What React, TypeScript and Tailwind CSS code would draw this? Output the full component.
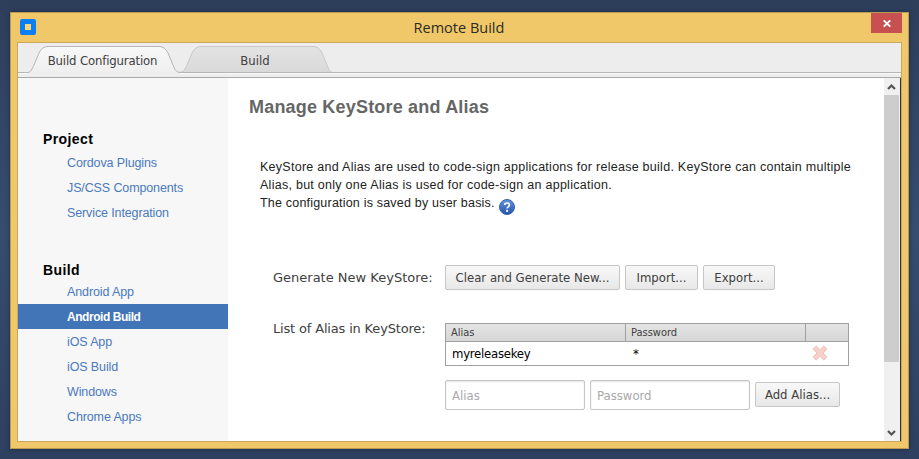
import React from "react";

const arial = "font-['Liberation_Sans',Arial,sans-serif]";
const verdana = "font-['DejaVu_Sans',Verdana,sans-serif]";
const tahoma = "font-['DejaVu_Sans_Condensed','DejaVu_Sans',Tahoma,sans-serif] [font-stretch:condensed]";

function Link({ label, active = false }: { label: string; active?: boolean }) {
  return (
    <a
      className={`block h-[25px] pt-px pl-[49px] leading-[25px] whitespace-nowrap ${
        active
          ? "bg-[#4175b8] text-[12px] font-bold tracking-[-0.45px] text-white"
          : "text-[12.5px] tracking-[-0.12px] text-[#4a7abd]"
      }`}
    >
      {label}
    </a>
  );
}

function Button({ label, className }: { label: string; className: string }) {
  return (
    <button
      className={`flex h-[25px] shrink-0 items-center justify-center rounded-[2px] border border-[#c6c6c6] bg-linear-to-b from-[#f8f8f8] to-[#e8e8e8] text-[13px] whitespace-nowrap text-[#404040] ${className}`}
    >
      {label}
    </button>
  );
}

function Field({ label, className }: { label: string; className: string }) {
  return (
    <input
      placeholder={label}
      className={`h-[30px] shrink-0 rounded-[2px] border border-[#c6c6c6] bg-white pt-px pl-[6px] text-[13px] shadow-[inset_0_1px_2px_#e4e4e4] placeholder:text-[#a9a9a9] ${tahoma} ${className}`}
    />
  );
}

function Tabs() {
  return (
    <div className="relative h-[35px] bg-[#ededed]">
      <svg width="883" height="35" className="block">
        <defs>
          <linearGradient id="on" x1="0" y1="0" x2="0" y2="1">
            <stop offset="0" stopColor="#f8f8f8" />
            <stop offset="1" stopColor="#ededed" />
          </linearGradient>
          <linearGradient id="off" x1="0" y1="0" x2="0" y2="1">
            <stop offset="0" stopColor="#e3e3e3" />
            <stop offset="1" stopColor="#d9d9d9" />
          </linearGradient>
        </defs>
        <path
          d="M161 29.5C166 29 167 26 169 22L174 10Q177 3.5 183 3.5H295Q301 3.500 304 10L309 22C311 27 312 29 315 29.500Z"
          fill="url(#off)"
          stroke="#c8c8c8"
        />
        <path
          d="M10 29.500C13 29 14 26 16 22L21 10Q24 3.500 30 3.500H141Q147 3.500 150 10L155 22C157 27 158 29 162 29.500L162 34H10Z"
          fill="url(#on)"
        />
        <path d="M162 30.500H883M0 30.500H10" stroke="#fafafa" />
        <path
          d="M0 29.500H10C13 29 14 26 16 22L21 10Q24 3.500 30 3.500H141Q147 3.500 150 10L155 22C157 27 158 29 162 29.500H883"
          fill="none"
          stroke="#b5b5b5"
        />
        <path d="M0 34.500H883" stroke="#a9a9a9" />
      </svg>
      <div className={`absolute inset-0 flex h-[35px] text-[13px] leading-[35px] text-[#404040] ${tahoma}`}>
        <span className="w-[169px] text-center tracking-[-0.15px]">Build Configuration</span>
        <span className="w-[136px] text-center">Build</span>
      </div>
    </div>
  );
}

function Sidebar() {
  return (
    <nav className={`h-full w-[210px] shrink-0 bg-[#f7f7f7] pt-[50px] ${arial}`}>
      <h2 className="h-[22px] pl-[25px] text-[14px] leading-[22px] font-bold tracking-[0.4px]">Project</h2>
      <Link label="Cordova Plugins" />
      <Link label="JS/CSS Components" />
      <Link label="Service Integration" />
      <h2 className="mt-[34px] h-[20px] pl-[25px] text-[14px] leading-[22px] font-bold tracking-[0.4px]">Build</h2>
      <Link label="Android App" />
      <Link label="Android Build" active />
      <Link label="iOS App" />
      <Link label="iOS Build" />
      <Link label="Windows" />
      <Link label="Chrome Apps" />
    </nav>
  );
}

function HelpIcon() {
  return (
    <svg width="16" height="16" viewBox="0 0 16 16" className="mb-px ml-1 shrink-0">
      <defs>
        <linearGradient id="help" x1="0" y1="0" x2="0" y2="1">
          <stop offset="0" stopColor="#6294dc" />
          <stop offset="1" stopColor="#2454ae" />
        </linearGradient>
      </defs>
      <circle cx="8" cy="8" r="7.500" fill="url(#help)" stroke="#3763ad" />
      <path d="M5.700 6C5.700 3.300 10.400 3.300 10.400 6C10.400 7.800 8.100 7.800 8.100 9.600" fill="none" stroke="#fff" strokeWidth="1.700" />
      <rect x="7.100" y="10.900" width="2" height="2" fill="#fff" />
    </svg>
  );
}

function Main() {
  return (
    <main className="flex min-w-0 flex-1 flex-col bg-white pl-[21px]">
      <h1 className={`mt-[17px] h-[24px] text-[18px] leading-[24px] font-bold tracking-[0.19px] text-[#666] ${arial}`}>
        Manage KeyStore and Alias
      </h1>
      <div className={`mt-[39px] h-[108px] pl-[11px] text-[12.5px] leading-[18px] tracking-[0.27px] whitespace-nowrap text-[#222] ${arial}`}>
        <p>KeyStore and Alias are used to code-sign applications for release build. KeyStore can contain multiple</p>
        <p>Alias, but only one Alias is used for code-sign an application.</p>
        <div className="flex h-[22px] items-end">
          <p className="h-[22px] w-[235px] tracking-[0.2px]">The configuration is saved by user basis.</p>
          <HelpIcon />
        </div>
      </div>
      <div className={`flex h-[24px] pl-[24px] text-[13px] text-[#404040] ${verdana}`}>
        <span className="w-[172px] shrink-0 leading-[24px] whitespace-nowrap">Generate New KeyStore:</span>
        <div className={`-mt-px flex gap-[5px] ${tahoma}`}>
          <Button label="Clear and Generate New..." className="w-[175px]" />
          <Button label="Import..." className="w-[73px]" />
          <Button label="Export..." className="w-[72px]" />
        </div>
      </div>
      <div className={`mt-[32px] flex pl-[24px] text-[13px] text-[#404040] ${verdana}`}>
        <span className="w-[172px] shrink-0 leading-[13px] tracking-[-0.17px] whitespace-nowrap">
          List of Alias in KeyStore:
        </span>
        <div className={tahoma}>
          <div className="mt-px h-[43px] w-[404px] border border-[#a0a0a0]">
            <div className="flex h-[18px] border-b border-[#a0a0a0] bg-linear-to-b from-[#e4e4e4] to-[#d6d6d6] text-[11px] leading-[18px]">
              <span className="w-[180px] border-r border-[#a0a0a0] pl-[5px]">Alias</span>
              <span className="w-[180px] border-r border-[#a0a0a0] pl-[5px]">Password</span>
            </div>
            <div className="flex h-[23px] text-[13px] leading-[23px] text-black">
              <span className="w-[187px] pl-[6px] tracking-[-0.25px]">myreleasekey</span>
              <span className="w-[179px]">*</span>
              <svg width="16" height="16" viewBox="0 0 16 16" className="mt-[3px]">
                <path
                  d="M4.300 1L1.200 4L5 8L1.200 12L4.300 15L8 11.300L11.700 15L14.800 12L11 8L14.800 4L11.700 1L8 4.700Z"
                  fill="#f6d0c9"
                  stroke="#efbfb7"
                  strokeLinejoin="round"
                />
              </svg>
            </div>
          </div>
          <div className="mt-[14px] flex gap-[5px]">
            <Field label="Alias" className="w-[140px]" />
            <Field label="Password" className="w-[160px]" />
            <Button label="Add Alias..." className="mt-[2px] w-[85px]" />
          </div>
        </div>
      </div>
    </main>
  );
}

function Scrollbar() {
  return (
    <div className="flex w-[17px] shrink-0 flex-col border-r border-[#30323a] bg-[#f0f0f0]">
      <svg width="16" height="17">
        <path d="M4 11L7.500 7.500L11 11" fill="none" stroke="#555" strokeWidth="2.200" />
      </svg>
      <div className="h-[267px] w-[15px] bg-[#cdcdcd]" />
      <svg width="16" height="17" className="mt-auto">
        <path d="M4 7L7.500 10.500L11 7" fill="none" stroke="#555" strokeWidth="2.200" />
      </svg>
    </div>
  );
}

export default function App() {
  return (
    <div className="h-[459px] w-[919px] overflow-hidden bg-linear-to-b from-[#2d3e5b] via-[#364d70] to-[#2e405f] pt-[12px] pl-[10px]">
      <div className="flex h-[437px] w-[899px] flex-col border border-[#b89a52] bg-[#f0c869] px-[6px] pb-[6px] shadow-[0_0_4px_#1d2a40]">
        <header className="flex h-[29px] shrink-0">
          <div className="w-[300px] pt-[6px] pl-[3px]">
            <div className="h-[16px] w-[16px] rounded-[2px] border-5 border-[#087ff5] bg-[#f8d47c]" />
          </div>
          <div className="w-[284px] text-center font-['Open_Sans','Noto_Sans',sans-serif] text-[14.5px] leading-[30px] text-[#2b2b26]">
            Remote Build
          </div>
          <div className="ml-auto flex h-[20px] w-[31px] items-center justify-center bg-[#c75050]">
            <svg width="8" height="7">
              <path d="M.7 .3L7.300 6.700M7.300 .3L.7 6.700" stroke="#fff" strokeWidth="1.800" />
            </svg>
          </div>
        </header>
        <div className="flex min-h-0 flex-1 flex-col border border-[#c9a85b]">
          <Tabs />
          <div className="flex h-[363px]">
            <Sidebar />
            <Main />
            <Scrollbar />
          </div>
        </div>
      </div>
    </div>
  );
}
